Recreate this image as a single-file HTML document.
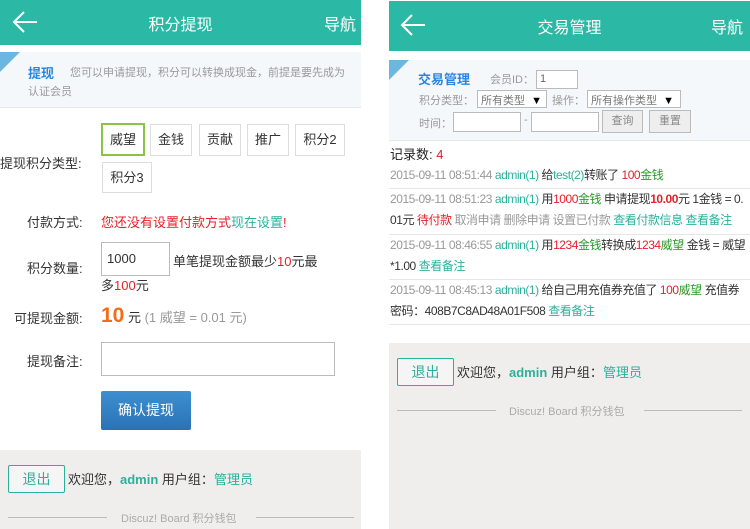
<!DOCTYPE html>
<html><head><meta charset="utf-8"><style>
*{margin:0;padding:0;box-sizing:border-box}
body{width:750px;height:529px;background:#fff;position:relative;overflow:hidden;font-family:"Liberation Sans","Noto Sans CJK SC",sans-serif;font-size:13px;color:#333}
.a{position:absolute;white-space:nowrap}
.hd{background:#2bb9a6;color:#fff}
.tip{background:#f4f8fb;border-bottom:1px solid #e4e8ec}
.tri{width:0;height:0;border-top:20px solid #5aaee0;border-right:20px solid transparent}
.btn{border:1px solid #ddd;background:#fff;text-align:center;line-height:30px;font-size:13px}
.inp{border:1px solid #bbb;background:#fff}
.teal{color:#2bb09c}.red{color:#e5202a}.grn{color:#2a9a2a}.gray{color:#999}
.foot{background:#efeeed}
.line{height:1px;background:#bbb}
.tb{border:1px solid #2bb09c;border-radius:2px;color:#2bb09c;text-align:center;background:#f5f5f5}
.row{position:absolute;left:389px;width:361px;font-size:12px;line-height:21px;color:#333;border-bottom:1px solid #e6e6e6;padding:0 1px;white-space:normal;letter-spacing:-0.45px;word-break:break-all}
</style></head><body>
<!-- LEFT -->
<div class="a hd" style="left:0;top:0;width:361px;height:45px"></div>
<svg class="a" style="left:10px;top:9px" width="30" height="26"><path d="M27 13H4M14 3L4 13l10 10" stroke="#fff" stroke-width="2" fill="none"/></svg>
<div class="a" style="left:0;width:361px;top:11px;text-align:center;color:#fff;font-size:16px">积分提现</div>
<div class="a" style="left:324px;top:11px;color:#fff;font-size:16px">导航</div>
<div class="a tip" style="left:0;top:52px;width:361px;height:56px"></div>
<div class="a tri" style="left:0;top:52px;border-top-color:#6cb6e2"></div>
<div class="a" style="left:28px;top:63px;font-size:13px;font-weight:bold;color:#2a86dd">提现</div>
<div class="a" style="left:70px;top:64px;font-size:11px;color:#999">您可以申请提现，积分可以转换成现金，前提是要先成为</div>
<div class="a" style="left:28px;top:83px;font-size:11px;color:#999">认证会员</div>
<div class="a" style="left:0;top:153px;font-size:13px">提现积分类型:</div>
<div class="a btn" style="left:101px;top:123px;width:44px;height:33px;border:2px solid #8bc34a">威望</div>
<div class="a btn" style="left:150px;top:124px;width:42px;height:32px">金钱</div>
<div class="a btn" style="left:199px;top:124px;width:42px;height:32px">贡献</div>
<div class="a btn" style="left:247px;top:124px;width:42px;height:32px">推广</div>
<div class="a btn" style="left:295px;top:124px;width:50px;height:32px">积分2</div>
<div class="a btn" style="left:102px;top:162px;width:50px;height:31px">积分3</div>
<div class="a" style="left:27px;top:212px">付款方式:</div>
<div class="a red" style="left:101px;top:212px">您还没有设置付款方式<span class="teal">现在设置</span>!</div>
<div class="a" style="left:27px;top:258px">积分数量:</div>
<div class="a inp" style="left:101px;top:242px;width:69px;height:34px;padding:8px 5px;font-size:13px">1000</div>
<div class="a" style="left:173px;top:251px">单笔提现金额最少<span class="red">10</span>元最</div>
<div class="a" style="left:101px;top:275px">多<span class="red">100</span>元</div>
<div class="a" style="left:14px;top:308px">可提现金额:</div>
<div class="a" style="left:101px;top:304px"><b style="font-size:21px;color:#f26c1c">10</b> 元 <span class="gray">(1 威望 = 0.01 元)</span></div>
<div class="a" style="left:27px;top:351px">提现备注:</div>
<div class="a inp" style="left:101px;top:342px;width:234px;height:34px"></div>
<div class="a" style="left:101px;top:391px;width:90px;height:39px;background:linear-gradient(#3d8fd0,#2a72b5);border-radius:2px;color:#fff;text-align:center;line-height:39px;font-size:14px">确认提现</div>
<div class="a foot" style="left:0;top:450px;width:361px;height:79px"></div>
<div class="a tb" style="left:8px;top:465px;width:57px;height:28px;line-height:26px;font-size:14px">退出</div>
<div class="a" style="left:68px;top:469px;font-size:13px">欢迎您，<b class="teal">admin</b> 用户组：<span class="teal">管理员</span></div>
<div class="a line" style="left:8px;top:517px;width:99px"></div>
<div class="a" style="left:121px;top:510px;font-size:11px;color:#aaa">Discuz! Board 积分钱包</div>
<div class="a line" style="left:256px;top:517px;width:98px"></div>
<!-- RIGHT -->
<div class="a hd" style="left:389px;top:1px;width:361px;height:50px"></div>
<svg class="a" style="left:398px;top:12px" width="30" height="26"><path d="M27 13H4M14 3L4 13l10 10" stroke="#fff" stroke-width="2" fill="none"/></svg>
<div class="a" style="left:389px;width:361px;top:14px;text-align:center;color:#fff;font-size:16px">交易管理</div>
<div class="a" style="left:711px;top:14px;color:#fff;font-size:16px">导航</div>
<div class="a tip" style="left:389px;top:60px;width:361px;height:81px"></div>
<div class="a tri" style="left:389px;top:60px;border-top-color:#6cb6e2"></div>
<div class="a" style="left:418px;top:69px;font-size:13px;font-weight:bold;color:#2a86dd">交易管理</div>
<div class="a gray" style="left:490px;top:71px;font-size:11px">会员ID：</div>
<div class="a inp" style="left:536px;top:70px;width:42px;height:19px;font-size:11px;padding:2px 3px;color:#666">1</div>
<div class="a gray" style="left:419px;top:92px;font-size:11px">积分类型：</div>
<div class="a inp" style="left:477px;top:90px;width:70px;height:18px;font-size:11px;padding:1px 3px;color:#777">所有类型 &nbsp;<span style="color:#000">▼</span></div>
<div class="a gray" style="left:552px;top:92px;font-size:11px">操作：</div>
<div class="a inp" style="left:587px;top:90px;width:94px;height:18px;font-size:11px;padding:1px 3px;color:#777">所有操作类型 &nbsp;<span style="color:#000">▼</span></div>
<div class="a gray" style="left:419px;top:115px;font-size:11px">时间：</div>
<div class="a inp" style="left:453px;top:112px;width:68px;height:20px"></div>
<div class="a gray" style="left:524px;top:114px;font-size:11px">-</div>
<div class="a inp" style="left:531px;top:112px;width:68px;height:20px"></div>
<div class="a" style="left:602px;top:110px;width:41px;height:23px;border:1px solid #bbb;background:#eee;text-align:center;line-height:21px;font-size:11px;color:#888">查询</div>
<div class="a" style="left:649px;top:110px;width:42px;height:23px;border:1px solid #bbb;background:#eee;text-align:center;line-height:21px;font-size:11px;color:#888">重置</div>
<div class="a" style="left:390px;top:144px;font-size:13px;color:#222">记录数: <span class="red">4</span></div>
<div class="row" style="top:164px;height:25px;line-height:22px"><span class="gray">2015-09-11 08:51:44</span> <span class="teal">admin(1)</span> 给<span class="teal">test(2)</span>转账了 <span class="red">100</span><span class="grn">金钱</span></div>
<div class="row" style="top:189px;height:46px"><span class="gray">2015-09-11 08:51:23</span> <span class="teal">admin(1)</span> 用<span class="red">1000</span><span class="grn">金钱</span> 申请提现<b class="red">10.00</b>元 1金钱 = 0.01元 <span class="red">待付款</span> <span class="gray">取消申请 删除申请 设置已付款</span> <span class="teal">查看付款信息 查看备注</span></div>
<div class="row" style="top:235px;height:45px"><span class="gray">2015-09-11 08:46:55</span> <span class="teal">admin(1)</span> 用<span class="red">1234</span><span class="grn">金钱</span>转换成<span class="red">1234</span><span class="grn">威望</span> 金钱 = 威望*1.00 <span class="teal">查看备注</span></div>
<div class="row" style="top:280px;height:45px"><span class="gray">2015-09-11 08:45:13</span> <span class="teal">admin(1)</span> 给自己用充值券充值了 <span class="red">100</span><span class="grn">威望</span> 充值券密码：408B7C8AD48A01F508 <span class="teal">查看备注</span></div>
<div class="a foot" style="left:389px;top:343px;width:361px;height:186px"></div>
<div class="a tb" style="left:397px;top:358px;width:57px;height:28px;line-height:26px;font-size:14px">退出</div>
<div class="a" style="left:457px;top:362px;font-size:13px">欢迎您，<b class="teal">admin</b> 用户组：<span class="teal">管理员</span></div>
<div class="a line" style="left:397px;top:410px;width:99px"></div>
<div class="a" style="left:509px;top:403px;font-size:11px;color:#aaa">Discuz! Board 积分钱包</div>
<div class="a line" style="left:644px;top:410px;width:98px"></div>
</body></html>
